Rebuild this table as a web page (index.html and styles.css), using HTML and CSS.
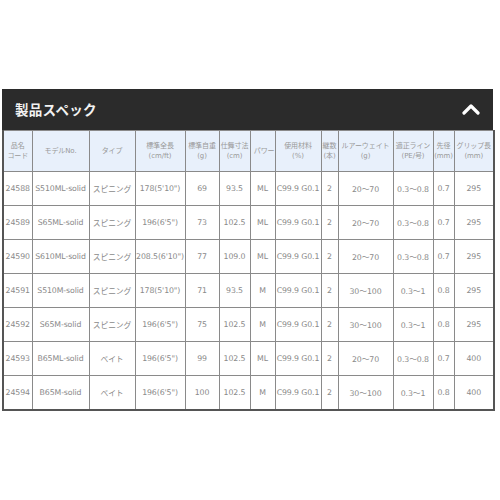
FILE: index.html
```html
<!DOCTYPE html>
<html lang="ja">
<head>
<meta charset="utf-8">
<link rel="stylesheet" href="styles.css">
</head>
<body>
<div class="panel">
  <div class="bar">
    <h2 class="title">製品スペック</h2>
    <svg class="chev" width="18" height="12" viewBox="0 0 18 12"><path d="M2 10 L9 3 L16 10" fill="none" stroke="#fff" stroke-width="3.2" stroke-linecap="round" stroke-linejoin="round"/></svg>
  </div>
  <table class="spec">
    <colgroup>
      <col style="width:29px"><col style="width:57px"><col style="width:46px"><col style="width:50px"><col style="width:34px"><col style="width:31px"><col style="width:25px"><col style="width:46px"><col style="width:17px"><col style="width:55px"><col style="width:40px"><col style="width:21px"><col style="width:40px">
    </colgroup>
    <thead>
      <tr>
        <th>品名<br>コード</th><th>モデルNo.</th><th>タイプ</th><th>標準全長<br>(cm/ft)</th><th>標準自重<br>(g)</th><th>仕舞寸法<br>(cm)</th><th class="clip">パワー</th><th>使用材料<br>(%)</th><th>継数<br>(本)</th><th>ルアーウェイト<br>(g)</th><th>適正ライン<br>(PE/号)</th><th>先径<br>(mm)</th><th>グリップ長<br>(mm)</th>
      </tr>
    </thead>
    <tbody>
      <tr><td>24588</td><td>S510ML-solid</td><td>スピニング</td><td>178(5'10")</td><td>69</td><td>93.5</td><td>ML</td><td>C99.9 G0.1</td><td>2</td><td>20～70</td><td>0.3～0.8</td><td>0.7</td><td>295</td></tr>
      <tr><td>24589</td><td>S65ML-solid</td><td>スピニング</td><td>196(6'5")</td><td>73</td><td>102.5</td><td>ML</td><td>C99.9 G0.1</td><td>2</td><td>20～70</td><td>0.3～0.8</td><td>0.7</td><td>295</td></tr>
      <tr><td>24590</td><td>S610ML-solid</td><td>スピニング</td><td>208.5(6'10")</td><td>77</td><td>109.0</td><td>ML</td><td>C99.9 G0.1</td><td>2</td><td>20～70</td><td>0.3～0.8</td><td>0.7</td><td>295</td></tr>
      <tr><td>24591</td><td>S510M-solid</td><td>スピニング</td><td>178(5'10")</td><td>71</td><td>93.5</td><td>M</td><td>C99.9 G0.1</td><td>2</td><td>30～100</td><td>0.3～1</td><td>0.8</td><td>295</td></tr>
      <tr><td>24592</td><td>S65M-solid</td><td>スピニング</td><td>196(6'5")</td><td>75</td><td>102.5</td><td>M</td><td>C99.9 G0.1</td><td>2</td><td>30～100</td><td>0.3～1</td><td>0.8</td><td>295</td></tr>
      <tr><td>24593</td><td>B65ML-solid</td><td>ベイト</td><td>196(6'5")</td><td>99</td><td>102.5</td><td>ML</td><td>C99.9 G0.1</td><td>2</td><td>20～70</td><td>0.3～0.8</td><td>0.7</td><td>400</td></tr>
      <tr><td>24594</td><td>B65M-solid</td><td>ベイト</td><td>196(6'5")</td><td>100</td><td>102.5</td><td>M</td><td>C99.9 G0.1</td><td>2</td><td>30～100</td><td>0.3～1</td><td>0.8</td><td>400</td></tr>
    </tbody>
  </table>
</div>
</body>
</html>
```

FILE: styles.css
```css
html, body {
  margin: 0;
  padding: 0;
  background: #fff;
}
body {
  font-family: "DejaVu Sans", "Noto Sans CJK JP", sans-serif;
}
.panel {
  width: 491px;
  margin-left: 2px;
  padding-top: 89px;
}
.bar {
  height: 41px;
  background: #2b2b2b;
  display: flex;
  align-items: center;
  justify-content: space-between;
  padding: 0 13px 0 13px;
  box-sizing: border-box;
}
.title {
  margin: 0;
  color: #f2f2f2;
  font-family: "Noto Sans CJK JP", sans-serif;
  font-size: 13.5px;
  font-weight: 700;
  letter-spacing: 0.3px;
  line-height: 1;
}
.chev {
  display: block;
  margin-top: -2px;
}
.spec {
  width: 491px;
  table-layout: fixed;
  border-collapse: collapse;
  border: 2px solid #555;
  border-top: none;
  color: #8a8a8a;
}
.spec th, .spec td {
  border: 1px solid #8a8a8a;
  text-align: center;
  padding: 0;
  overflow: hidden;
  white-space: nowrap;
}
.spec th {
  background: #e8f0fb;
  height: 40px;
  font-size: 7px;
  font-weight: 400;
  line-height: 10px;
  color: #999;
  letter-spacing: -0.1px;
}
.spec th.clip {
  text-align: right;
}
.spec td {
  height: 33px;
  font-size: 7.8px;
  letter-spacing: -0.1px;
}
```
